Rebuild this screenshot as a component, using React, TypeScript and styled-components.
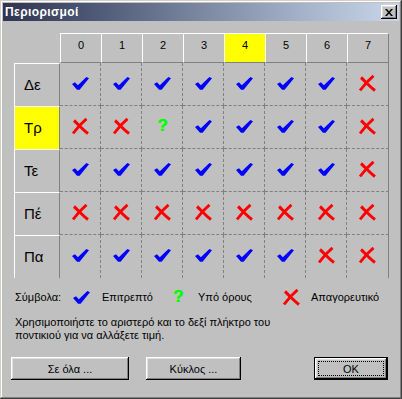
import React from "react";
import styled, { createGlobalStyle } from "styled-components";

type Mark = "ok" | "cond" | "no";

interface RowData {
  label: string;
  marks: Mark[];
  highlight?: boolean;
}

const columns = ["0", "1", "2", "3", "4", "5", "6", "7"];
const activeColumn = "4";

const rows: RowData[] = [
  { label: "Δε", marks: ["ok", "ok", "ok", "ok", "ok", "ok", "ok", "no"] },
  { label: "Τρ", marks: ["no", "no", "cond", "ok", "ok", "ok", "ok", "no"], highlight: true },
  { label: "Τε", marks: ["ok", "ok", "ok", "ok", "ok", "ok", "ok", "no"] },
  { label: "Πέ", marks: ["no", "no", "no", "no", "no", "no", "no", "no"] },
  { label: "Πα", marks: ["ok", "ok", "ok", "ok", "ok", "ok", "no", "no"] },
];

const GlobalStyle = createGlobalStyle`
  html, body {
    margin: 0;
    padding: 0;
    background: #c0c0c0;
  }
  body {
    font-family: "Liberation Sans", Arial, sans-serif;
    font-size: 11px;
    color: #000;
  }
`;

const CheckIcon = () => (
  <svg width="17" height="13" viewBox="0 0 17 13">
    <path d="M0 7 L3 5.2 L5.8 8.2 L14.4 0 L17 1.2 L7.6 12.8 L5 12.8 Z" fill="#0000ff" />
  </svg>
);

const CrossIcon = () => (
  <svg width="18" height="17" viewBox="0 0 18 17">
    <path d="M2 2.5 C5 5 10 11 16 15.5" stroke="#ff0000" strokeWidth="3" fill="none" />
    <path d="M14.5 0.8 C10 4.5 5 10 1 15.5" stroke="#ff0000" strokeWidth="2.8" fill="none" />
  </svg>
);

const Question = styled.span`
  color: #00ff00;
  font-weight: bold;
  font-size: 17px;
  line-height: 14px;
  text-shadow: 0.5px 0 0 #00ff00;
`;

const renderMark = (m: Mark) => {
  if (m === "ok") return <CheckIcon />;
  if (m === "no") return <CrossIcon />;
  return <Question>?</Question>;
};

export default function App() {
  return (
    <>
      <GlobalStyle />
      <Window>
        <TitleBar>
          <Title>Περιορισμοί</Title>
          <CloseButton>
            <svg width="8" height="7" viewBox="0 0 8 7">
              <path d="M0 0 L2 0 L4 2.5 L6 0 L8 0 L5 3.5 L8 7 L6 7 L4 4.5 L2 7 L0 7 L3 3.5 Z" fill="#000" />
            </svg>
          </CloseButton>
        </TitleBar>
        <Client>
          <Grid>
            <Corner />
            {columns.map((c, i) => (
              <HeaderCell key={c} $highlight={c === activeColumn} $last={i === columns.length - 1}>
                {c}
              </HeaderCell>
            ))}
            {rows.map((r, ri) => (
              <React.Fragment key={r.label}>
                <RowLabel $highlight={!!r.highlight}>{r.label}</RowLabel>
                {r.marks.map((m, i) => (
                  <Cell key={i} $last={i === r.marks.length - 1} $lastRow={ri === rows.length - 1}>
                    {renderMark(m)}
                  </Cell>
                ))}
              </React.Fragment>
            ))}
          </Grid>

          <Legend>
            <LegendCaption>Σύμβολα:</LegendCaption>
            <LegendItem $width={100}>
              <IconSlot $width={29}>
                <CheckIcon />
              </IconSlot>
              Επιτρεπτό
            </LegendItem>
            <LegendItem $width={110}>
              <IconSlot $width={25}>
                <Question>?</Question>
              </IconSlot>
              Υπό όρους
            </LegendItem>
            <LegendItem>
              <IconSlot $width={28}>
                <CrossIcon />
              </IconSlot>
              Απαγορευτικό
            </LegendItem>
          </Legend>

          <Hint>
            Χρησιμοποιήστε το αριστερό και το δεξί πλήκτρο του ποντικιού για να αλλάξετε τιμή.
          </Hint>

          <ButtonRow>
            <Button $width={118}>Σε όλα ...</Button>
            <Button $width={95}>Κύκλος ...</Button>
            <DefaultButton $width={74}>
              <FocusRect>OK</FocusRect>
            </DefaultButton>
          </ButtonRow>
        </Client>
      </Window>
    </>
  );
}

const Window = styled.div`
  box-sizing: border-box;
  width: 402px;
  height: 399px;
  padding: 3px;
  display: flex;
  flex-direction: column;
  background: #c0c0c0;
  box-shadow: inset -1px -1px #404040, inset 1px 1px #d4d0c8, inset -2px -2px #808080,
    inset 2px 2px #ffffff;
`;

const TitleBar = styled.div`
  height: 18px;
  display: flex;
  align-items: center;
  justify-content: space-between;
  padding: 0 2px 0 2px;
  background: linear-gradient(90deg, #2f3450 0%, #515c78 25%, #7b88a0 50%, #a3b2c8 75%, #cad6e8 100%);
`;

const Title = styled.span`
  color: #fff;
  font-weight: bold;
  font-size: 12px;
  letter-spacing: 0.4px;
`;

const CloseButton = styled.div`
  box-sizing: border-box;
  width: 16px;
  height: 14px;
  display: flex;
  align-items: center;
  justify-content: center;
  background: #c0c0c0;
  box-shadow: inset -1px -1px #000, inset 1px 1px #fff, inset -2px -2px #808080, inset 2px 2px #dfdfdf;
`;

const Client = styled.div`
  flex: 1;
  display: flex;
  flex-direction: column;
  padding: 12px 11px 0 8px;
`;

const Grid = styled.div`
  margin-left: 3px;
  display: grid;
  grid-template-columns: 46px repeat(7, 41px) 42px;
  grid-template-rows: 30px repeat(5, 43px);
`;

const Corner = styled.div``;

const HeaderCell = styled.div<{ $highlight: boolean; $last: boolean }>`
  box-sizing: border-box;
  padding-top: 5px;
  text-align: center;
  line-height: 13px;
  font-size: 11px;
  background: ${(p) => (p.$highlight ? "#ffff00" : "#c0c0c0")};
  border-top: 1px solid #fff;
  border-left: 1px solid #fff;
  border-bottom: 1px solid #808080;
  border-right: ${(p) => (p.$last ? "1px solid #808080" : "none")};
`;

const RowLabel = styled.div<{ $highlight: boolean }>`
  box-sizing: border-box;
  display: flex;
  align-items: center;
  padding-left: 9px;
  padding-bottom: 2px;
  font-size: 15px;
  background: ${(p) => (p.$highlight ? "#ffff00" : "#c0c0c0")};
  border-top: 1px solid #fff;
  border-left: 1px solid #fff;
  border-right: 1px solid #808080;
`;

const Cell = styled.div<{ $last: boolean; $lastRow: boolean }>`
  box-sizing: border-box;
  display: flex;
  align-items: center;
  justify-content: center;
  padding-bottom: 2px;
  padding-left: 1px;
  border-bottom: ${(p) => (p.$lastRow ? "none" : "1px dashed #808080")};
  border-right: 1px ${(p) => (p.$last ? "solid" : "dashed")} #808080;
`;

const Legend = styled.div`
  margin-top: 10px;
  height: 18px;
  padding-left: 4px;
  display: flex;
  align-items: center;
`;

const LegendCaption = styled.span`
  width: 58px;
`;

const LegendItem = styled.div<{ $width?: number }>`
  display: flex;
  align-items: center;
  width: ${(p) => (p.$width ? `${p.$width}px` : "auto")};
`;

const IconSlot = styled.span<{ $width: number }>`
  width: ${(p) => p.$width}px;
  display: flex;
  align-items: center;
`;

const Hint = styled.div`
  margin-top: 10px;
  padding-left: 4px;
  width: 290px;
  line-height: 13px;
`;

const ButtonRow = styled.div`
  margin-top: 15px;
  display: flex;
  gap: 17px;
`;

const Button = styled.div<{ $width: number }>`
  box-sizing: border-box;
  width: ${(p) => p.$width}px;
  height: 23px;
  display: flex;
  align-items: center;
  justify-content: center;
  background: #c0c0c0;
  box-shadow: inset -1px -1px #000, inset 1px 1px #fff, inset -2px -2px #808080, inset 2px 2px #dfdfdf;
`;

const DefaultButton = styled(Button)`
  margin-left: auto;
  border: 1px solid #000;
  padding: 3px;
`;

const FocusRect = styled.div`
  box-sizing: border-box;
  width: 100%;
  height: 100%;
  display: flex;
  align-items: center;
  justify-content: center;
  outline: 1px dotted #000;
  outline-offset: -1px;
`;
